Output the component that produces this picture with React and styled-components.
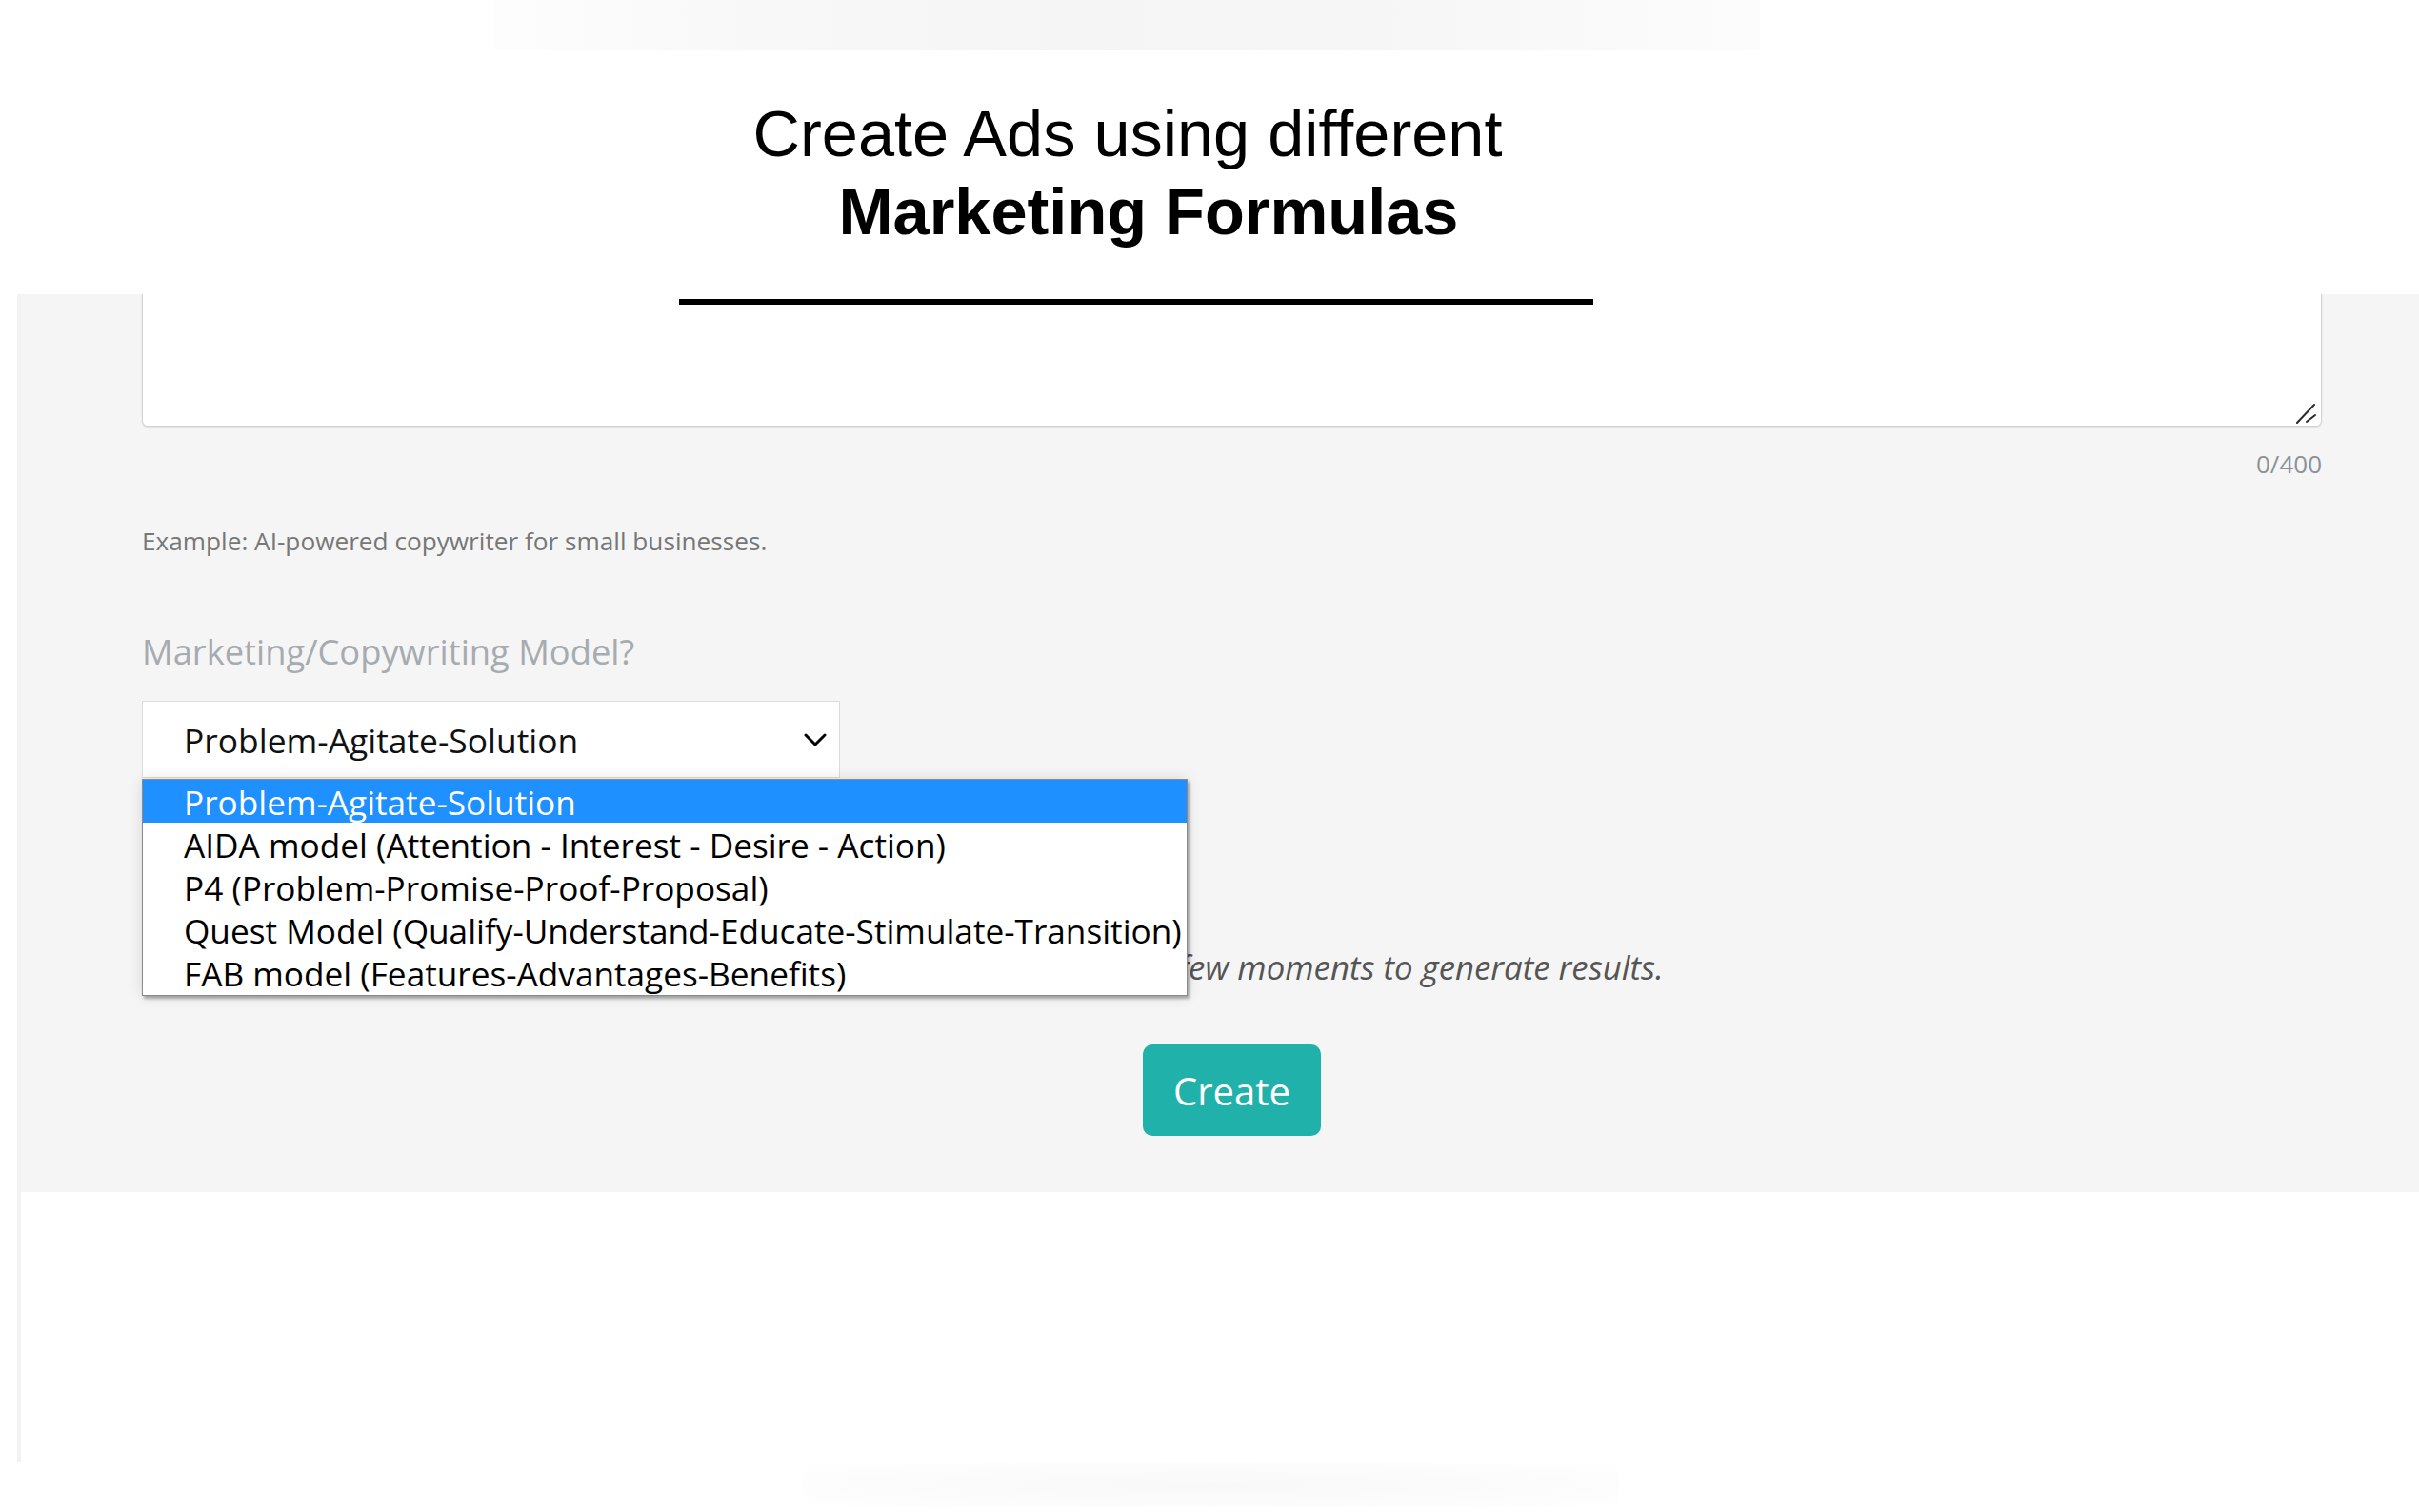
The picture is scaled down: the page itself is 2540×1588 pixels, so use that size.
import React from "react";
import styled, { createGlobalStyle } from "styled-components";

const GlobalStyle = createGlobalStyle`
  html, body {
    margin: 0;
    padding: 0;
    background: #ffffff;
  }
  body {
    font-family: "Open Sans", "Noto Sans", sans-serif;
  }
  * { box-sizing: border-box; }
`;

const Page = styled.div`
  width: 2540px;
  min-height: 1588px;
  background: #ffffff;
  overflow: hidden;
`;

const Header = styled.header`
  position: relative;
  z-index: 1;
  height: 309px;
  background: #ffffff;
  display: flex;
  flex-direction: column;
  align-items: center;
  padding-right: 154px;
  & > * { flex-shrink: 0; }
`;

const TopGlow = styled.div`
  align-self: flex-start;
  margin-left: 519px;
  width: 1329px;
  height: 52px;
  background: linear-gradient(
    90deg,
    #fdfdfd 0%,
    #f8f8f8 20%,
    #f5f5f5 45%,
    #f6f6f6 70%,
    #fcfcfc 100%
  );
`;

const Title = styled.h1`
  margin: 48px 0 0;
  font-family: "Liberation Sans", Arial, sans-serif;
  font-size: 68.5px;
  line-height: 82px;
  font-weight: 400;
  color: #000000;
  display: flex;
  flex-direction: column;
  align-items: center;
`;

const TitleLine = styled.span`
  display: block;
  font-weight: ${(p) => (p.$bold ? 700 : 400)};
  margin-left: ${(p) => p.$ml || 0}px;
  margin-right: ${(p) => p.$mr || 0}px;
  white-space: nowrap;
`;

const Rule = styled.div`
  width: 960px;
  height: 6px;
  margin-top: 50px;
  background: #000000;
`;

const Frame = styled.div`
  margin-left: 18px;
  border-left: 4px solid #f3f3f3;
`;

const Panel = styled.main`
  background: #f5f5f5;
  padding: 0 102px 59px 127px;
  display: flex;
  flex-direction: column;
`;

const TextAreaWrap = styled.div`
  position: relative;
  margin-top: -20px;
`;

const TextArea = styled.textarea`
  display: block;
  width: 100%;
  height: 159px;
  border: 1px solid #d2d2d2;
  border-radius: 6px;
  background: #ffffff;
  box-shadow: 0 1px 2px rgba(0, 0, 0, 0.1);
  resize: none;
  outline: none;
  font-family: inherit;
  font-size: 26px;
`;

const ResizeGrip = styled.svg`
  position: absolute;
  right: 6px;
  bottom: 3px;
  pointer-events: none;
`;

const Counter = styled.div`
  align-self: flex-end;
  margin-top: 21px;
  font-size: 26px;
  line-height: 36px;
  color: #8d9196;
`;

const Hint = styled.p`
  margin: 45px 0 0;
  font-size: 26.2px;
  line-height: 36px;
  color: #777777;
`;

const Label = styled.label`
  display: block;
  margin-top: 74px;
  font-size: 36.3px;
  line-height: 48px;
  color: #a6abb0;
`;

const SelectWrap = styled.div`
  position: relative;
  margin-top: 28px;
  width: 733px;
`;

const SelectBox = styled.div`
  height: 81px;
  border: 1px solid #dcdcdc;
  background: #ffffff;
  display: flex;
  align-items: center;
  justify-content: space-between;
  padding: 0 13px 0 43px;
  font-size: 35.4px;
  color: #111111;
`;

const OptionList = styled.ul`
  position: absolute;
  top: 100%;
  left: 0;
  z-index: 2;
  width: 1098px;
  margin: 1px 0 0;
  padding: 0;
  list-style: none;
  background: #ffffff;
  border: 1px solid #8a8a8a;
  box-shadow: 0 0 14px rgba(0, 0, 0, 0.12), 2px 3px 3px rgba(0, 0, 0, 0.3);
`;

const Option = styled.li`
  height: 45.2px;
  display: flex;
  align-items: center;
  padding-left: 43px;
  font-size: 35.2px;
  white-space: nowrap;
  color: ${(p) => (p.$active ? "#ffffff" : "#000000")};
  background: ${(p) => (p.$active ? "#1e90ff" : "transparent")};
`;

const Note = styled.p`
  margin: 177px 0 0;
  text-align: center;
  font-style: italic;
  font-size: 34.8px;
  line-height: 44px;
  color: #555555;
`;

const CreateButton = styled.button`
  align-self: center;
  margin-top: 59px;
  width: 187px;
  height: 96px;
  border: none;
  border-radius: 10px;
  background: #20b2aa;
  color: #ffffff;
  font-family: inherit;
  font-size: 40px;
  font-weight: 500;
  cursor: pointer;
`;

const FooterSpace = styled.div`
  height: 283px;
`;

const BottomGlow = styled.div`
  margin: 2px 0 0 843px;
  width: 857px;
  height: 46px;
  background: radial-gradient(ellipse at center, #f8f8f8 0%, #fcfcfc 60%, #ffffff 100%);
`;

const options = [
  "Problem-Agitate-Solution",
  "AIDA model (Attention - Interest - Desire - Action)",
  "P4 (Problem-Promise-Proof-Proposal)",
  "Quest Model (Qualify-Understand-Educate-Stimulate-Transition)",
  "FAB model (Features-Advantages-Benefits)",
];

const Chevron = () => (
  <svg width="24" height="14" viewBox="0 0 24 14" fill="none">
    <polyline
      points="2,2 12,12 22,2"
      stroke="#000"
      strokeWidth="3"
      strokeLinecap="round"
      strokeLinejoin="round"
    />
  </svg>
);

export default function App() {
  return (
    <Page>
      <GlobalStyle />
      <Header>
        <TopGlow />
        <Title>
          <TitleLine $mr={18}>Create Ads using different</TitleLine>
          <TitleLine $bold $ml={26}>Marketing Formulas</TitleLine>
        </Title>
        <Rule />
      </Header>
      <Frame>
        <Panel>
          <TextAreaWrap>
            <TextArea maxLength={400} />
            <ResizeGrip width="24" height="24" viewBox="0 0 24 24" fill="none">
              <line x1="22" y1="4" x2="4" y2="23" stroke="#2b2b2b" strokeWidth="2" strokeLinecap="round" />
              <line x1="23" y1="15" x2="14" y2="22" stroke="#2b2b2b" strokeWidth="2" strokeLinecap="round" />
            </ResizeGrip>
          </TextAreaWrap>
          <Counter>0/400</Counter>
          <Hint>Example: AI-powered copywriter for small businesses.</Hint>
          <Label>Marketing/Copywriting Model?</Label>
          <SelectWrap>
            <SelectBox>
              <span>Problem-Agitate-Solution</span>
              <Chevron />
            </SelectBox>
            <OptionList>
              {options.map((o, i) => (
                <Option key={o} $active={i === 0}>
                  {o}
                </Option>
              ))}
            </OptionList>
          </SelectWrap>
          <Note>Please wait, it may take a few moments to generate results.</Note>
          <CreateButton>Create</CreateButton>
        </Panel>
        <FooterSpace />
      </Frame>
      <BottomGlow />
    </Page>
  );
}
